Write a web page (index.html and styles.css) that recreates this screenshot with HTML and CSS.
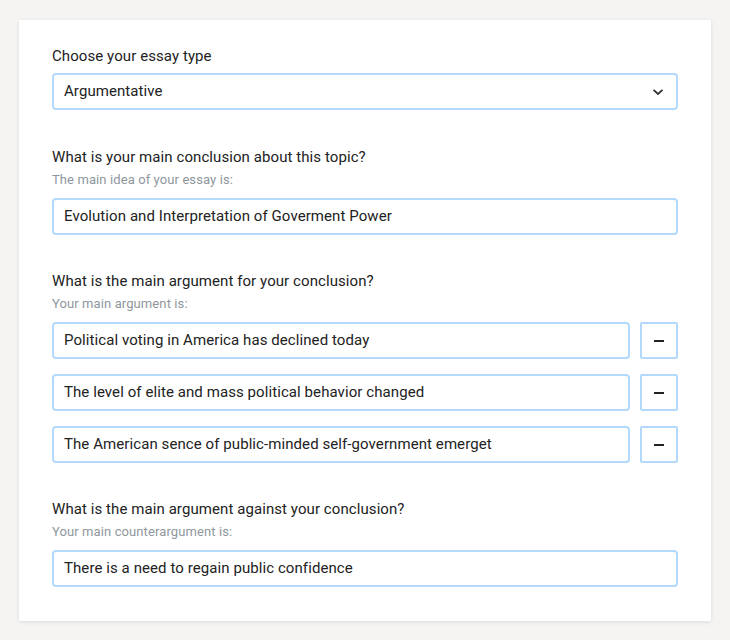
FILE: index.html
```html
<!DOCTYPE html>
<html>
<head>
<meta charset="utf-8">
<link rel="stylesheet" href="styles.css">
</head>
<body>
<div class="card">
  <div class="group first">
    <div class="label">Choose your essay type</div>
    <div class="field select">
      <span>Argumentative</span>
      <svg class="chev" width="12" height="8" viewBox="0 0 12 8"><path d="M1.5 1.8 L6 6 L10.5 1.8" fill="none" stroke="#333" stroke-width="1.8"/></svg>
    </div>
  </div>
  <div class="group">
    <div class="label">What is your main conclusion about this topic?</div>
    <div class="sub">The main idea of your essay is:</div>
    <div class="field">Evolution and Interpretation of Goverment Power</div>
  </div>
  <div class="group">
    <div class="label">What is the main argument for your conclusion?</div>
    <div class="sub">Your main argument is:</div>
    <div class="rows">
      <div class="row"><div class="field">Political voting in America has declined today</div><div class="minus"><span></span></div></div>
      <div class="row"><div class="field">The level of elite and mass political behavior changed</div><div class="minus"><span></span></div></div>
      <div class="row"><div class="field">The American sence of public-minded self-government emerget</div><div class="minus"><span></span></div></div>
    </div>
  </div>
  <div class="group">
    <div class="label">What is the main argument against your conclusion?</div>
    <div class="sub">Your main counterargument is:</div>
    <div class="field">There is a need to regain public confidence</div>
  </div>
</div>
</body>
</html>
```
FILE: styles.css
```css
html, body { margin: 0; padding: 0; }
body {
  background: #f5f4f2;
  font-family: Roboto, "Liberation Sans", sans-serif;
  color: #222;
  width: 730px;
  height: 640px;
}
.card {
  background: #fff;
  margin: 20px 0 0 19px;
  width: 692px;
  height: 601px;
  box-sizing: border-box;
  padding: 26px 33px 0 33px;
  box-shadow: 0 1px 4px rgba(0,0,0,0.10);
  display: flex;
  flex-direction: column;
  gap: 36px;
}
.group.first { margin-bottom: 1px; }
.label {
  font-size: 15px;
  line-height: 20px;
  letter-spacing: 0.08px;
  margin-bottom: 7px;
}
.sub {
  font-size: 13px;
  line-height: 18px;
  letter-spacing: 0.1px;
  color: #8f979e;
  margin-top: -3px;
  margin-bottom: 9px;
}
.field {
  box-sizing: border-box;
  height: 37px;
  border: 2px solid #b3dafc;
  border-radius: 4px;
  padding: 0 10px;
  font-size: 15px;
  line-height: 33px;
  letter-spacing: 0.08px;
  color: #222;
  flex: 1;
}
.select {
  display: flex;
  align-items: center;
  justify-content: space-between;
}
.chev { margin-right: 2px; }
.rows { display: flex; flex-direction: column; gap: 15px; }
.row { display: flex; gap: 10px; }
.minus {
  box-sizing: border-box;
  width: 38px;
  height: 37px;
  border: 2px solid #b3dafc;
  border-radius: 2px;
  display: flex;
  align-items: center;
  justify-content: center;
}
.minus span {
  display: block;
  width: 10px;
  height: 2px;
  background: #222;
}
```
